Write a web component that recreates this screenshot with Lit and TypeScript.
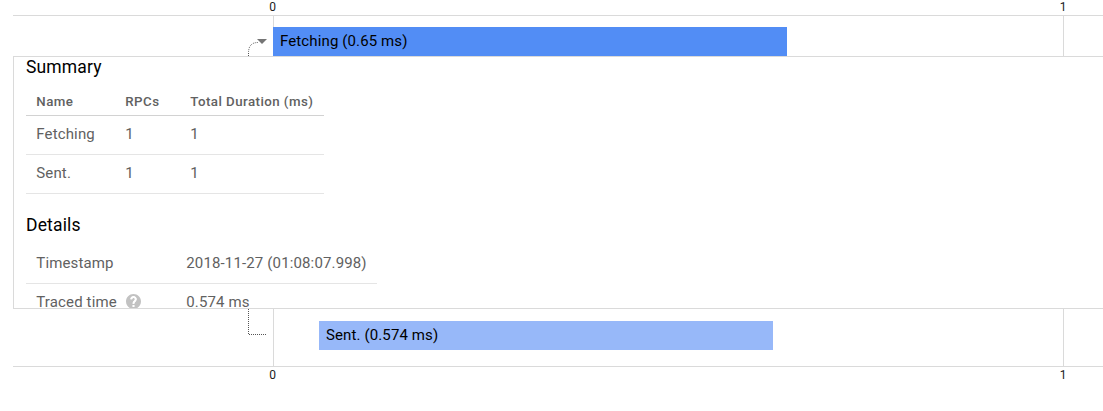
import { LitElement, html, css } from "lit";
import { customElement } from "lit/decorators.js";

@customElement("app-root")
export class AppRoot extends LitElement {
  static styles = css`
    :host { display: block; height: 411px; overflow: hidden; background: #fff; font-family: Roboto, sans-serif; color: #000; }
    * { box-sizing: border-box; }
    .timeline { margin-left: 13px; }
    .axis, .track { display: grid; grid-template-columns: 260px 790px 1fr; }
    .axis { height: 16px; font-size: 12px; line-height: 14px; color: #212121; }
    .axis.top { border-bottom: 1px solid #dadada; }
    .axis.bottom { border-top: 1px solid #dadada; height: 20px; padding-top: 1px; }
    .tick { width: 14px; margin-left: -7.4px; text-align: center; }
    .tick.end { margin-left: -7px; }
    .track.first { height: 40px; }
    .track.second { height: 57px; }
    .cell { border-left: 1px solid #dadada; }
    .tree { display: flex; justify-content: flex-end; }
    .tree svg { display: block; }
    .bar { height: 29px; padding-left: 7px; font-size: 15px; line-height: 28px; letter-spacing: 0.12px; white-space: nowrap; }
    .bar.fetching { margin: 11px 0 0 -1px; background: #528df5; }
    .bar.sent { margin: 12px 0 0 45px; background: #97b8f9; }
    .panel { height: 253px; border: 1px solid #dadada; border-right: 0; padding-left: 12px; overflow: hidden; color: #616161; }
    h2 { margin: 0; font-size: 17.5px; line-height: 20px; font-weight: 400; letter-spacing: 0.16px; color: #000; }
    .row { display: grid; height: 39px; border-bottom: 1px solid #e5e5e5; padding-left: 10.3px; font-size: 15px; line-height: 37px; letter-spacing: 0.14px; white-space: nowrap; }
    .summary { width: 298px; margin-top: 9px; }
    .summary .row { grid-template-columns: 89px 65px 1fr; }
    .summary .row.head { height: 30px; line-height: 31px; font-size: 13.3px; font-weight: 500; letter-spacing: 0.45px; border-color: #d2d2d2; }
    .details-title { margin-top: 21px; }
    .details { width: 351px; margin-top: 10px; }
    .details .row { grid-template-columns: 150px 1fr; }
    .label { display: flex; align-items: center; height: 37px; }
    .label svg { margin: 0 0 2px 9px; }
  `;

  render() {
    return html`
      <div class="timeline">
        <div class="axis top"><span></span><span class="tick">0</span><span class="tick end">1</span></div>
        <div class="track first">
          <div class="tree">
            <svg width="26" height="40" viewBox="0 0 26 40">
              <path d="M1.5 40V37Q1.5 26.5 11 26.5" fill="none" stroke="#555" stroke-dasharray="1 1" />
              <path d="M10 23H20L15 28Z" fill="#757575" />
            </svg>
          </div>
          <div class="cell"><div class="bar fetching" style="width:514px">Fetching (0.65 ms)</div></div>
          <div class="cell"></div>
        </div>
        <section class="panel">
          <h2>Summary</h2>
          <div class="summary">
            <div class="row head"><span>Name</span><span>RPCs</span><span>Total Duration (ms)</span></div>
            <div class="row"><span>Fetching</span><span>1</span><span>1</span></div>
            <div class="row"><span>Sent.</span><span>1</span><span>1</span></div>
          </div>
          <h2 class="details-title">Details</h2>
          <div class="details">
            <div class="row"><span>Timestamp</span><span>2018-11-27 (01:08:07.998)</span></div>
            <div class="row">
              <span class="label">Traced time
                <svg width="15" height="15" viewBox="2 2 20 20"><path fill="#c2c2c2" d="M12 2C6.48 2 2 6.48 2 12s4.48 10 10 10 10-4.48 10-10S17.52 2 12 2zm1 17h-2v-2h2v2zm2.07-7.75l-.9.92C13.45 12.9 13 13.5 13 15h-2v-.5c0-1.1.45-2.1 1.17-2.83l1.24-1.26c.37-.36.59-.86.59-1.41 0-1.1-.9-2-2-2s-2 .9-2 2H8c0-2.21 1.79-4 4-4s4 1.79 4 4c0 .88-.36 1.68-.93 2.25z"/><path fill="none" stroke="#fff" stroke-width="2.6" d="M9 9a3 3 0 1 1 5.1 2.1l-1.2 1.2Q12 13.2 12 15M12 16.8V19.2"/></svg>
              </span><span>0.574 ms</span>
            </div>
          </div>
        </section>
        <div class="track second">
          <div class="tree">
            <svg width="26" height="57" viewBox="0 0 26 57">
              <path d="M1.5 0V25.5H19" fill="none" stroke="#555" stroke-dasharray="1 1" />
            </svg>
          </div>
          <div class="cell"><div class="bar sent" style="width:454px">Sent. (0.574 ms)</div></div>
          <div class="cell"></div>
        </div>
        <div class="axis bottom"><span></span><span class="tick">0</span><span class="tick end">1</span></div>
      </div>
    `;
  }
}
